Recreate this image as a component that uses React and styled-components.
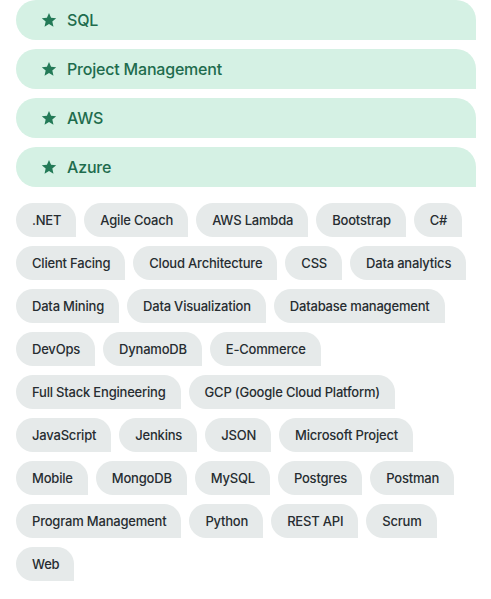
import React from 'react';
import styled, { createGlobalStyle } from 'styled-components';

const GlobalStyle = createGlobalStyle`
  body {
    margin: 0;
    background: #ffffff;
    font-family: Inter, "Liberation Sans", Arial, sans-serif;
  }
`;

const Page = styled.div`
  width: 460px;
  padding: 0 15px 0 16px;
  display: flex;
  flex-direction: column;
`;

const Featured = styled.ul`
  list-style: none;
  margin: 0;
  padding: 0;
  display: flex;
  flex-direction: column;
  gap: 9px;
`;

const FeaturedItem = styled.li`
  height: 40px;
  display: flex;
  align-items: center;
  gap: 10px;
  padding-left: 25px;
  background-color: #d5f1e4;
  border-radius: 20px 20px 0 20px;
  color: #1e6c4d;
  font-size: 16px;
  font-weight: 500;
  letter-spacing: -0.2px;
`;

const Skills = styled.ul`
  list-style: none;
  margin: 16px 0 0;
  padding: 0;
  display: flex;
  flex-wrap: wrap;
  gap: 9px 8px;
`;

const Chip = styled.li`
  height: 34px;
  display: flex;
  align-items: center;
  padding: 0 15px 0 16px;
  background-color: #e6eaea;
  border-radius: 17px 17px 0 17px;
  color: #272d31;
  font-size: 13px;
  font-weight: 500;
  letter-spacing: -0.2px;
  white-space: nowrap;
`;

function Star() {
  return (
    <svg width="16" height="16" viewBox="0 0 24 24" aria-hidden="true">
      <path
        fill="#237a57"
        d="M12 1.5l3.1 7.1 7.7.7-5.8 5.1 1.7 7.6L12 18l-6.7 4 1.7-7.6-5.8-5.1 7.7-.7z"
      />
    </svg>
  );
}

const featured = ['SQL', 'Project Management', 'AWS', 'Azure'];

const skills = [
  '.NET', 'Agile Coach', 'AWS Lambda', 'Bootstrap', 'C#',
  'Client Facing', 'Cloud Architecture', 'CSS', 'Data analytics',
  'Data Mining', 'Data Visualization', 'Database management',
  'DevOps', 'DynamoDB', 'E-Commerce',
  'Full Stack Engineering', 'GCP (Google Cloud Platform)',
  'JavaScript', 'Jenkins', 'JSON', 'Microsoft Project',
  'Mobile', 'MongoDB', 'MySQL', 'Postgres', 'Postman',
  'Program Management', 'Python', 'REST API', 'Scrum',
  'Web',
];

export default function App() {
  return (
    <Page>
      <GlobalStyle />
      <Featured>
        {featured.map((name) => (
          <FeaturedItem key={name}>
            <Star />
            {name}
          </FeaturedItem>
        ))}
      </Featured>
      <Skills>
        {skills.map((name) => (
          <Chip key={name}>{name}</Chip>
        ))}
      </Skills>
    </Page>
  );
}
